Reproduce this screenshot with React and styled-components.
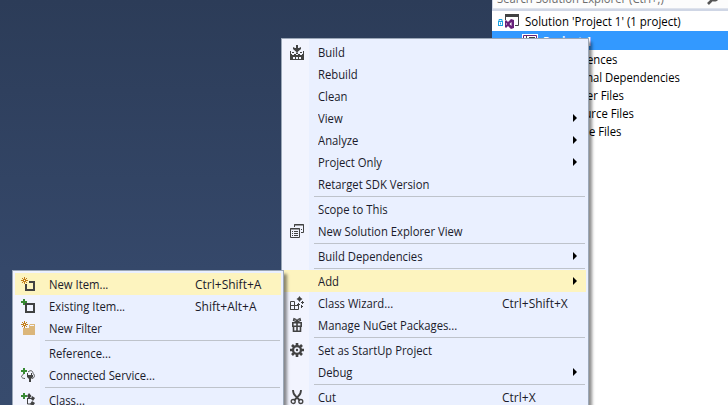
import React from "react";
import styled, { createGlobalStyle } from "styled-components";

const Global = createGlobalStyle`
  * { box-sizing: border-box; }
  body { margin: 0; overflow: hidden; }
`;

const Desktop = styled.main`
  position: relative;
  display: flex;
  justify-content: flex-end;
  width: 728px;
  height: 405px;
  overflow: hidden;
  background: linear-gradient(#2c3c58, #35486a 270px, #374b6d);
  font: 12px/18px "Open Sans", "Noto Sans", sans-serif;
  color: #1b1b2b;
`;

const Text = styled.span`
  display: inline-block;
  padding-top: 2px;
  white-space: pre;
  transform: scaleX(${(p) => p.$scale || 0.94});
  transform-origin: 0 50%;
`;

const Explorer = styled.aside`
  width: 236px;
  display: flex;
  flex-direction: column;
  background: #fff;
  color: #000;
`;

const SearchBar = styled.div`
  flex: none;
  height: 11px;
  padding-bottom: 2px;
  background: #cfd6e5;
`;

const SearchField = styled.div`
  display: flex;
  align-items: flex-end;
  justify-content: space-between;
  height: 9px;
  padding: 0 9px 0 4px;
  margin-left: 1px;
  background: #fcfcfc;
  border-bottom: 1px solid #dfe3ec;
  overflow: hidden;
  color: #6d6d6d;
`;

const SearchText = styled(Text)`
  padding: 0;
  line-height: 18px;
`;

const TreeRow = styled.div`
  flex: none;
  display: flex;
  align-items: center;
  height: ${(p) => p.$height || 18}px;
  padding-left: ${(p) => p.$indent || 67}px;
  background: ${(p) => (p.$selected ? "#3399ff" : "transparent")};
  color: ${(p) => (p.$selected ? "#fff" : "inherit")};
  font-weight: ${(p) => (p.$selected ? 700 : 400)};
`;

const TreeLabel = styled(Text)`
  margin-left: ${(p) => p.$gap || 0}px;
`;

const Menu = styled.div`
  position: absolute;
  left: ${(p) => p.$x}px;
  top: ${(p) => p.$y}px;
  width: ${(p) => p.$width}px;
  padding: 2px;
  border: 1px solid #9ba7b7;
  background: linear-gradient(90deg, #f2f4fe 27px, #eaf0ff 27px);
  box-shadow: 3px 4px 3px rgba(0, 0, 0, 0.45);
`;

const Item = styled.div`
  display: grid;
  grid-template-columns: 34px 1fr ${(p) => p.$keys}px;
  align-items: center;
  height: 22px;
  background: ${(p) => (p.$active ? "#fdf4bf" : "transparent")};
`;

const IconCell = styled.span`
  display: flex;
  padding-left: 6px;
`;

const KeyCell = styled.span`
  display: flex;
  align-items: center;
`;

const Arrow = styled.span`
  margin-left: auto;
  margin-right: 9px;
  border-left: 4px solid #000;
  border-top: 4px solid transparent;
  border-bottom: 4px solid transparent;
`;

const Separator = styled.div`
  height: 3px;
  margin: 0 1px 0 30px;
  border-top: 1px solid transparent;
  border-bottom: 1px solid transparent;
  background: #bec3cb;
  background-clip: padding-box;
`;

const Svg = styled.svg`
  display: block;
  flex: none;
`;

const INK = "#424242";
const Star = () => (
  <g stroke="#c27d1a" fill="none">
    <path d="M3.5 0v7M0 3.5h7M1 1l5 5M6 1l-5 5" />
    <rect x="3" y="3" width="1" height="1" fill="#fff" stroke="none" />
  </g>
);
const Plus = () => <path d="M0 3h6M3 0v6" stroke="#388a34" strokeWidth="2" fill="none" />;

const drawings = {
  build: (
    <g fill={INK} transform="translate(0 -1)">
      <path d="M6 1h2v3h1l2-1v2L7 8.500 3 5V3l2 1h1z" />
      <path d="M0 7h1v3h12V7h1v9H0z" />
      <path d="M2 8h2v1H2zM10 8h2v1h-2zM6 8.500h2V10H6z" />
      <path d="M2 10h2v1H2zM6 10h2v1H6zM10 10h2v1h-2zM3 13h2v2H3zM6 13h2v2H6zM9 13h2v2H9z" fill="#f2f4fe" />
    </g>
  ),
  view: (
    <g fill="none" stroke={INK}>
      <path d="M4.500 3V.5h9v8H11M4 1h10M11 5.500h1" />
      <path d="M.5 4.500h9v9h-9zM0 5h10" />
      <path d="M2 7.500h1M4 7.500h4M2 9.500h1M4 9.500h4M2 11.500h1M4 11.500h4" />
    </g>
  ),
  wizard: (
    <g>
      <path d="M.5 5.500h4v8h-4zM.5 9.500h8v4h-8zM4.500 9.500v4" fill="none" stroke={INK} />
      <path d="M9.500 0l1.200 1.800 1.800 1.200-1.800 1.200L9.500 6 8.300 4.200 6.500 3l1.800-1.200zM12 5h1v1h1v1h-1v1h-1V7h-1V6h1zM8 7h1v1h1v1H9v1H8V9H7V8h1zM11 9h1v1h1v1h-1v1h-1z" fill={INK} />
    </g>
  ),
  gift: (
    <g fill="none" stroke={INK}>
      <path d="M7 4L3.500 2.500 4 .7 6 1.500 7 4l1-2.500L10 .7l.5 1.800z" strokeWidth="1.300" />
      <path d="M2.800 4.800h8.400v3.400H2.800zM3.500 8.200h7v5h-7zM7 4v9" strokeWidth="1.600" />
    </g>
  ),
  gear: (
    <g>
      <path d="M7 0v14M0 7h14M2 2l10 10M12 2L2 12" stroke={INK} strokeWidth="2.600" />
      <circle cx="7" cy="7" r="3.900" fill="none" stroke={INK} strokeWidth="2.400" />
      <circle cx="7" cy="7" r="2.800" fill="#f2f4fe" />
      <circle cx="7" cy="7" r="1.200" fill={INK} />
    </g>
  ),
  cut: (
    <g fill="none" stroke={INK}>
      <path d="M3 0c0 3 1 5 3 6.500l4 4M11 0c0 3-1 5-3 6.500l-4 4" strokeWidth="1.800" />
      <circle cx="3.200" cy="11.500" r="2" strokeWidth="1.300" />
      <circle cx="10.800" cy="11.500" r="2" strokeWidth="1.300" />
    </g>
  ),
  newItem: (
    <g>
      <path d="M5 5h8v8H5z" fill="none" stroke={INK} strokeWidth="2" />
      <path d="M3 3h5v4H3z" fill="#fdf4bf" />
      <Star />
    </g>
  ),
  existing: (
    <g>
      <path d="M5 5h8v8H5z" fill="none" stroke={INK} strokeWidth="2" />
      <Plus />
    </g>
  ),
  filter: (
    <g>
      <path d="M2 6h5l2-3h5v11H2z" fill="#dcb67a" />
      <path d="M9 4.500h4" stroke="#f2f4fe" />
      <path d="M0 0h8v7H0z" fill="#f2f4fe" />
      <Star />
    </g>
  ),
  service: (
    <g>
      <path d="M4 10.500c-4 0-4.500-3-1.500-4M7 4c3-2.500 5-1 5 1.500 2 1 2 4.500-1 5" fill="none" stroke="#555" />
      <path d="M6 5h1v2h3V5h1v2h1v2l-2 2v3H8v-3L6 9z" fill={INK} />
      <Plus />
    </g>
  ),
  class: (
    <g>
      <path d="M8 0l2.500 3L8 6 6 3zM11 3l3 2-2 3-2-2zM11 8l3 2-2 3-3-2z" fill={INK} />
      <path d="M6.500 5v6H10M7 5.500h5" fill="none" stroke={INK} />
      <Plus />
    </g>
  ),
};

const Icon = ({ name }) => (
  <Svg width="15" height="16" viewBox="0 -1 15 16">{drawings[name]}</Svg>
);

const SolutionIcon = () => (
  <Svg width="22" height="16" viewBox="0 0 22 16">
    <path d="M0 8h5v5H0zM1 9v3h3V9z" fill="#1ba1e2" fillRule="evenodd" />
    <path d="M1 8V6.500h3V8M2.500 9.500v2" fill="none" stroke="#1ba1e2" />
    <path d="M7.500 7V1.500h13v11H17" fill="none" stroke={INK} />
    <path d="M7 1h14v3H7z" fill={INK} />
    <path d="M13 6l3 1v8l-3 1-3-3-2 2-1-1V8l1-1 2 2zM13.500 9l-2 2 2 2zM8.200 10v2l1-1z" fill="#68217a" fillRule="evenodd" />
  </Svg>
);

const ProjectIcon = () => (
  <Svg width="16" height="14" viewBox="0 0 16 14">
    <path d="M0 0h16v14H0z" fill="#fff" />
    <path d="M1.500 1.500h13v11h-13z" fill="none" stroke="#68217a" />
    <path d="M4 2h1v3H4zM7 3h6v1H7z" fill={INK} />
  </Svg>
);

const Magnifier = () => (
  <Svg width="12" height="8" viewBox="0 0 12 8">
    <path d="M1 4l5-5" stroke="#555" strokeWidth="2.600" />
    <path d="M4 0c2 2 5 2 7 0" fill="#555" />
  </Svg>
);

const contextItems = [
  ["Build", "build"], ["Rebuild"], ["Clean"],
  ["View", null, "", true], ["Analyze", null, "", true], ["Project Only", null, "", true],
  ["Retarget SDK Version"], null,
  ["Scope to This"], ["New Solution Explorer View", "view"], null,
  ["Build Dependencies", null, "", true], null,
  ["Add", null, "", true, true], ["Class Wizard...", "wizard", "Ctrl+Shift+X"],
  ["Manage NuGet Packages...", "gift"], null,
  ["Set as StartUp Project", "gear"], ["Debug", null, "", true], null,
  ["Cut", "cut", "Ctrl+X"],
];

const addItems = [
  ["New Item...", "newItem", "Ctrl+Shift+A", false, true],
  ["Existing Item...", "existing", "Shift+Alt+A"], ["New Filter", "filter"], null,
  ["Reference..."], ["Connected Service...", "service"], null,
  ["Class...", "class"],
];

const MenuList = ({ items, keys, ...place }) => (
  <Menu {...place}>
    {items.map((item, i) => {
      if (!item) return <Separator key={i} />;
      const [label, icon, shortcut, more, active] = item;
      return (
        <Item key={i} $keys={keys} $active={active}>
          <IconCell>{icon && <Icon name={icon} />}</IconCell>
          <KeyCell><Text>{label}</Text></KeyCell>
          <KeyCell>
            {shortcut && <Text $scale={1}>{shortcut}</Text>}
            {more && <Arrow />}
          </KeyCell>
        </Item>
      );
    })}
  </Menu>
);

export default function App() {
  return (
    <Desktop>
      <Global />
      <Explorer>
        <SearchBar>
          <SearchField>
            <SearchText>Search Solution Explorer (Ctrl+;)</SearchText>
            <Magnifier />
          </SearchField>
        </SearchBar>
        <TreeRow $height={20} $indent={6}>
          <SolutionIcon />
          <TreeLabel $gap={5} $scale={0.955}>Solution 'Project 1' (1 project)</TreeLabel>
        </TreeRow>
        <TreeRow $height={19} $indent={30} $selected>
          <ProjectIcon />
          <TreeLabel $gap={5} $scale={0.93}>Project 1</TreeLabel>
        </TreeRow>
        {["References", "External Dependencies", "Header Files", "Resource Files", "Source Files"].map((t) => (
          <TreeRow key={t}><TreeLabel>{t}</TreeLabel></TreeRow>
        ))}
      </Explorer>
      <MenuList items={contextItems} keys={84} $x={281} $y={38} $width={308} />
      <MenuList items={addItems} keys={86} $x={12} $y={270} $width={272} />
    </Desktop>
  );
}
